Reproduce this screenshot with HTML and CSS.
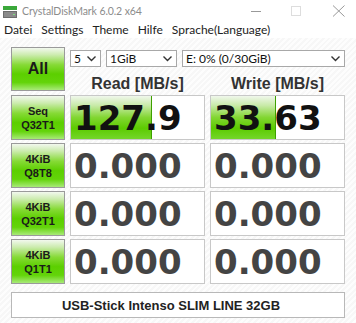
FILE: index.html
```html
<!DOCTYPE html>
<html lang="de">
<head>
    <meta charset="UTF-8">
    <meta name="viewport" content="width=device-width, initial-scale=1.0">
    <title>CrystalDiskMark 6.0.2 x64</title>
    <link rel="stylesheet" href="styles.css">
</head>
<body>

    <div class="title-bar">
        <svg class="app-icon" width="14" height="12" viewBox="0 0 14 12">
            <rect x="0" y="0" width="14" height="4" fill="#3aa83a"/>
            <rect x="0" y="5" width="14" height="7" fill="#6c6c6c"/>
            <rect x="1" y="6" width="12" height="5" fill="#8a8a8a"/>
            <rect x="10" y="8" width="2" height="1" fill="#7fe07f"/>
        </svg>
        <div class="title-text">CrystalDiskMark 6.0.2 x64</div>
        <div class="window-controls">
            <svg width="12" height="12" viewBox="0 0 12 12"><line x1="1" y1="6.5" x2="11" y2="6.5" stroke="#999" stroke-width="1"/></svg>
            <svg width="12" height="12" viewBox="0 0 12 12"><rect x="0.5" y="1.5" width="9" height="9" fill="none" stroke="#ddd" stroke-width="1"/></svg>
            <svg width="13" height="12" viewBox="0 0 13 12"><path d="M1 0.5 L12.5 11.5 M12.5 0.5 L1 11.5" stroke="#999" stroke-width="1"/></svg>
        </div>
    </div>

    <div class="menu-bar">
        <span class="menu-item">Datei</span>
        <span class="menu-item">Settings</span>
        <span class="menu-item">Theme</span>
        <span class="menu-item">Hilfe</span>
        <span class="menu-item">Sprache(Language)</span>
    </div>

    <div class="main">
        <div class="top-row">
            <div class="test-button all-button">All</div>
            <div class="top-right">
                <div class="combos">
                    <div class="combo combo-count">5<svg class="chevron" width="9" height="6" viewBox="0 0 9 6"><polyline points="0.5,0.5 4.5,4.5 8.5,0.5" fill="none" stroke="#333" stroke-width="1.4"/></svg></div>
                    <div class="combo combo-size">1GiB<svg class="chevron" width="9" height="6" viewBox="0 0 9 6"><polyline points="0.5,0.5 4.5,4.5 8.5,0.5" fill="none" stroke="#333" stroke-width="1.4"/></svg></div>
                    <div class="combo combo-drive">E: 0% (0/30GiB)<svg class="chevron" width="9" height="6" viewBox="0 0 9 6"><polyline points="0.5,0.5 4.5,4.5 8.5,0.5" fill="none" stroke="#333" stroke-width="1.4"/></svg></div>
                </div>
                <div class="headers">
                    <div class="col-header">Read [MB/s]</div>
                    <div class="col-header">Write [MB/s]</div>
                </div>
            </div>
        </div>

        <div class="results">
            <div class="test-button">Seq<br>Q32T1</div>
            <div class="result-cell"><div class="bar" style="width: 61%"></div><span class="value active">127.9</span></div>
            <div class="result-cell"><div class="bar" style="width: 49%"></div><span class="value active">33.63</span></div>

            <div class="test-button">4KiB<br>Q8T8</div>
            <div class="result-cell"><span class="value">0.000</span></div>
            <div class="result-cell"><span class="value">0.000</span></div>

            <div class="test-button">4KiB<br>Q32T1</div>
            <div class="result-cell"><span class="value">0.000</span></div>
            <div class="result-cell"><span class="value">0.000</span></div>

            <div class="test-button">4KiB<br>Q1T1</div>
            <div class="result-cell"><span class="value">0.000</span></div>
            <div class="result-cell"><span class="value">0.000</span></div>
        </div>

        <div class="comment-box">USB-Stick Intenso SLIM LINE 32GB</div>
    </div>

</body>
</html>
```

FILE: styles.css
```css
* {
    box-sizing: border-box;
}

body {
    margin: 0;
    width: 356px;
    height: 323px;
    overflow: hidden;
    background: #fff;
    font-family: Lato, 'Noto Sans', sans-serif;
}

.title-bar {
    height: 21px;
    display: flex;
    align-items: center;
    padding-left: 3px;
    background: #fff;
}

.app-icon {
    margin-top: 3px;
    margin-right: 5px;
}

.title-text {
    font-size: 10.5px;
    letter-spacing: -0.1px;
    color: #8c8c8c;
    margin-top: 1px;
}

.window-controls {
    margin-left: auto;
    display: flex;
    align-items: center;
    gap: 29px;
    padding-right: 11px;
}

.menu-bar {
    height: 17px;
    display: flex;
    align-items: center;
    padding-left: 4px;
    gap: 9px;
    background: #fff;
    font-size: 12px;
    color: #222;
}

.main {
    height: 285px;
    padding: 9px 11px 0 11px;
    background: repeating-linear-gradient(135deg, #f7f7f7 0px, #f7f7f7 2px, #fdfdfd 2px, #fdfdfd 4px);
}

.top-row {
    display: flex;
    gap: 5px;
    height: 44px;
}

.test-button {
    width: 54px;
    height: 45px;
    border: 1px solid #9a9a9a;
    background: linear-gradient(to bottom, #f2f8ee 0%, #cdecb0 16%, #86da36 40%, #5ccf00 62%, #63d40a 82%, #a8ea78 100%);
    display: flex;
    align-items: center;
    justify-content: center;
    text-align: center;
    font-family: 'Liberation Sans', Arial, sans-serif;
    font-weight: bold;
    font-size: 11px;
    line-height: 14px;
    color: #1a1a1a;
}

.all-button {
    height: 44px;
    font-size: 16px;
}

.top-right {
    display: flex;
    flex-direction: column;
    width: 275px;
}

.combos {
    display: flex;
    gap: 5px;
    margin-top: 3px;
}

.combo {
    height: 17px;
    border: 1px solid #a8a8a8;
    background: #fff;
    display: flex;
    align-items: center;
    padding-left: 3px;
    padding-right: 4px;
    font-size: 12px;
    color: #111;
}

.chevron {
    margin-left: auto;
}

.combo-count {
    width: 31px;
}

.combo-size {
    width: 71px;
}

.combo-drive {
    width: 163px;
}

.headers {
    display: flex;
    gap: 5px;
    margin-top: 8px;
}

.col-header {
    width: 135px;
    text-align: center;
    font-family: 'Liberation Sans', Arial, sans-serif;
    font-weight: bold;
    font-size: 16px;
    color: #333;
}

.results {
    display: grid;
    grid-template-columns: 54px 135px 135px;
    grid-auto-rows: 45px;
    column-gap: 5px;
    row-gap: 3px;
    margin-top: 4px;
}

.result-cell {
    position: relative;
    border: 1px solid #c8c8c8;
    background: #fff;
    display: flex;
    align-items: center;
    padding-left: 3px;
}

.bar {
    position: absolute;
    top: 0;
    left: 0;
    bottom: 0;
    background: linear-gradient(to bottom, #f0f7ec 0%, #c8eaa8 22%, #82d632 50%, #5ccb00 75%, #74d62a 100%);
    border-right: 1px solid #3ea000;
}

.value {
    position: relative;
    font-family: 'DejaVu Sans', Verdana, sans-serif;
    font-weight: bold;
    font-size: 34px;
    color: #444;
}

.value.active {
    color: #111;
}

.comment-box {
    margin-top: 8px;
    width: 334px;
    height: 26px;
    border: 1px solid #b8b8b8;
    background: #fff;
    display: flex;
    align-items: center;
    justify-content: center;
    padding-right: 14px;
    font-family: 'Liberation Sans', Arial, sans-serif;
    font-weight: bold;
    font-size: 13px;
    color: #222;
}
```
